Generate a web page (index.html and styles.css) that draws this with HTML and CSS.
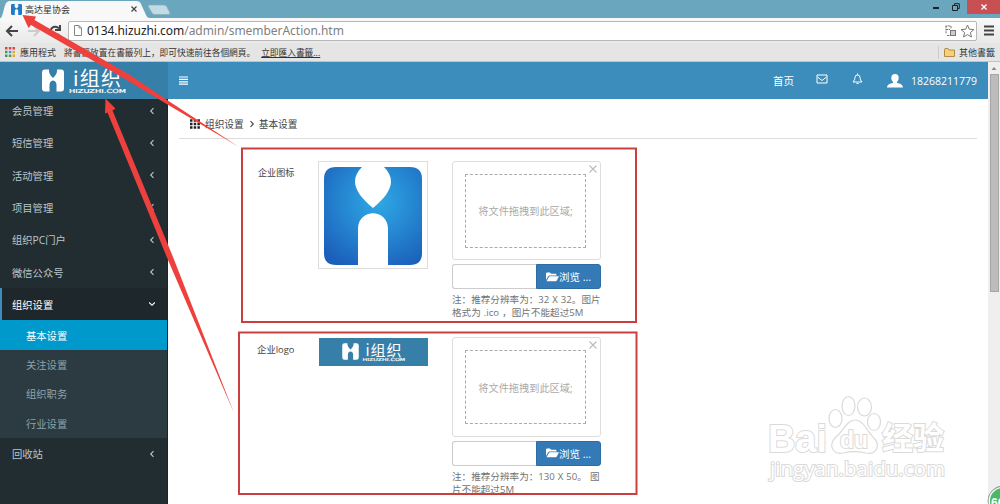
FILE: index.html
```html
<!DOCTYPE html>
<html lang="zh">
<head>
<meta charset="utf-8">
<title>高达星协会</title>
<link rel="stylesheet" href="styles.css">
</head>
<body>
<svg width="0" height="0" class="defs">
  <defs>
    <radialGradient id="blue" cx=".55" cy=".35" r=".75"><stop offset="0" stop-color="#2fa9e4"/><stop offset=".45" stop-color="#2689d3"/><stop offset="1" stop-color="#1b5fba"/></radialGradient>
    <symbol id="mark" viewBox="0 0 98 98"><path d="M12 0H38C25 13 31 26 49 41C67 26 73 13 60 0H86Q98 0 98 12V86Q98 98 86 98H64V62C64 41 34 41 34 62V98H12Q0 98 0 86V12Q0 0 12 0Z"/></symbol>
    <symbol id="brand" viewBox="0 0 86 28">
      <path fill="#fff" d="M3 1.500H7Q6.500 6 11 10Q15.500 6 15 1.500H19Q22 1.500 22 4.500V20.500Q22 23.500 19 23.500H14.500V17Q14.500 13 11 12.500Q7.500 13 7.500 17V23.500H3Q0 23.500 0 20.500V4.500Q0 1.500 3 1.500Z"/>
      <text class="brand-name" x="31" y="18" textLength="48">i组织</text>
      <text class="brand-url" x="27" y="25" textLength="57" lengthAdjust="spacingAndGlyphs">HIZUZHI.COM</text>
    </symbol>
    <symbol id="folder" viewBox="0 0 13 10"><path fill="#fff" d="M0 8V1.500Q0 .5 1 .5H4L5 1.800H9.500Q10.500 1.800 10.500 3V3.500H3.500Q2.600 3.500 2 4.500ZM.6 9.200 3 4.800Q3.200 4.300 4 4.300H13L10.800 8.600Q10.400 9.200 9.700 9.200Z"/></symbol>
    <symbol id="left" viewBox="0 0 6 8"><path d="M4.500 1.200 1.700 4 4.500 6.800" fill="none" stroke="currentColor" stroke-width="1.1"/></symbol>
  </defs>
</svg>
<div class="browser">
  <div class="titlebar">
    <svg class="tab-shape" width="172" height="19" viewBox="0 0 172 19"><path d="M0 19C3 18 4 4 7 2Q8 1 11 1H136Q140 1 141 4L146 15Q147 18 150 18V19Z" fill="#f8f8f8"/><path d="M149 5H164Q166 5 167 7L170 13Q170 14.500 168 14.500H155Q153 14.500 152 13L148 6Z" fill="#c3dbe5" stroke="#85adbb" stroke-width=".7"/></svg>
    <div class="tab-content">
      <svg width="11" height="11" fill="#207bc6"><use href="#mark"/></svg>
      <span class="tab-title">高达星协会</span>
      <svg class="tab-close" width="6" height="6"><path d="M.5.5 5.500 5.500M5.500.5.5 5.500" stroke="#444" stroke-width="1.2"/></svg>
    </div>
    <div class="window-buttons">
      <svg width="6" height="4"><path d="M0 3H6" stroke="#222" stroke-width="2"/></svg>
      <svg width="8" height="8"><path d="M.5 2.500H5.500V7.500H.5ZM2.500 2V.7H7.300V5.500H6" fill="none" stroke="#222"/></svg>
      <span class="close"><svg width="6" height="6"><path d="M.5.5 5.500 5.500M5.500.5.5 5.500" stroke="#fff" stroke-width="1.3"/></svg></span>
    </div>
  </div>
  <div class="toolbar">
    <svg width="62" height="20" fill="none" stroke="#444" stroke-width="2"><path d="M7 10H18M12 5 7 10 12 15"/><path d="M28 10H38M34 5 39 10 34 15" stroke="#ccc"/><path d="M59 7.500A4.600 4.600 0 1 0 59 13M60 4V9H55"/></svg>
    <div class="address">
      <svg width="8" height="11"><path d="M.5.5H5L7.500 3V10.500H.5ZM5 .5V3H7.500" fill="#fff" stroke="#888"/></svg>
      <span class="url"><b>0134.hizuzhi.com</b>/admin/smemberAction.htm</span>
      <svg class="address-icons" width="30" height="14"><g fill="none" stroke="#777"><path stroke-dasharray="2 .6" d="M.5 2H6M1 2V10M1 5.500H5M6 2V5M2 11.500H5"/><rect x="5.500" y="6.500" width="5" height="5" fill="#ccc"/><path d="M22.500 1 24.300 5.200 28.900 5.600 25.400 8.600 26.500 13 22.500 10.600 18.500 13 19.600 8.600 16.100 5.600 20.700 5.200Z" fill="#fff"/></g></svg>
    </div>
    <svg width="10" height="11"><path d="M0 1.500H10M0 5.500H10M0 9.500H10" stroke="#444" stroke-width="2"/></svg>
  </div>
  <div class="bookmarks">
    <svg width="10" height="10"><g stroke-width="2.400"><path d="M0 1.200H2.500M3.800 1.200H6.300M7.500 1.200H10" stroke="#d44"/><path d="M0 5H2.500M0 8.800H2.500M3.800 8.800H6.300" stroke="#469b54"/><path d="M3.800 5H6.300" stroke="#478cdf"/><path d="M7.500 5H10M7.500 8.800H10" stroke="#dfaa35"/></g></svg>
    <span class="apps">應用程式</span><span class="hint">將書籤放置在書籤列上，即可快速前往各個網頁。</span><a class="import">立即匯入書籤...</a>
    <span class="other"><svg width="11" height="9"><path d="M.5 2V1.500L1 .5H4L5 2H10.500V8.500H.5Z" fill="#f5cf7c" stroke="#b38c43"/></svg>其他書籤</span>
  </div>
</div>
<div class="page">
  <div class="app">
    <header>
      <div class="brand"><svg width="86" height="28"><use href="#brand"/></svg></div>
      <div class="topnav">
        <svg width="10" height="9"><path d="M0 1H9M0 3.400H9M0 5.800H9M0 8.200H9" stroke="#fff" stroke-width="1.200"/></svg>
        <div class="links">
          <span class="home">首页</span>
          <svg class="mail" width="12" height="10"><path d="M1 1H11V9H1ZM1.500 3 6 6.500 10.500 3" fill="none" stroke="#fff"/></svg>
          <svg class="bell" width="11" height="12"><path d="M1 9Q3 7 3 4.500Q3 2 5.500 2Q8 2 8 4.500Q8 7 10 9ZM5.500 2V.5M4.500 10.500H6.500" fill="none" stroke="#fff"/></svg>
          <svg class="user" width="16" height="14"><path d="M8 0C5.500 0 4.300 1.500 4.300 4C4.300 6 5.300 7.300 6 8V9C3 9.800.5 10 0 13.500H16C15.500 10 13 9.800 10 9V8C10.700 7.300 11.700 6 11.700 4C11.700 1.500 10.500 0 8 0Z" fill="#fff"/></svg>
          <span class="phone">18268211779</span>
        </div>
      </div>
    </header>
    <div class="body">
      <nav class="sidebar">
        <div class="item">会员管理<svg><use href="#left"/></svg></div>
        <div class="item">短信管理<svg><use href="#left"/></svg></div>
        <div class="item">活动管理<svg><use href="#left"/></svg></div>
        <div class="item">项目管理<svg><use href="#left"/></svg></div>
        <div class="item">组织PC门户<svg><use href="#left"/></svg></div>
        <div class="item">微信公众号<svg><use href="#left"/></svg></div>
        <div class="item open">组织设置<svg class="down"><use href="#left"/></svg></div>
        <div class="submenu">
          <div class="sub current">基本设置</div>
          <div class="sub">关注设置</div>
          <div class="sub">组织职务</div>
          <div class="sub">行业设置</div>
        </div>
        <div class="item">回收站<svg><use href="#left"/></svg></div>
      </nav>
      <main>
        <div class="crumbs"><svg width="10" height="10"><path d="M0 1.500H10M0 5H10M0 8.500H10" stroke="#222" stroke-width="2.400" stroke-dasharray="2.500 1.200"/></svg><span>组织设置</span><svg class="sep"><use href="#left"/></svg><span>基本设置</span></div>
        <section class="row">
          <div class="label">企业图标</div>
          <div class="icon-preview"><svg width="98" height="98" fill="url(#blue)"><use href="#mark"/></svg></div>
          <div class="upload">
            <div class="drop"><div class="zone">将文件拖拽到此区域;</div><svg class="x" width="8" height="8"><path d="M.5.5 7.500 7.500M7.500.5.5 7.500" stroke="#bbb" stroke-width="1.1"/></svg></div>
            <div class="file"><div class="filename"></div><div class="browse"><svg width="13" height="10"><use href="#folder"/></svg>浏览 ...</div></div>
            <div class="note">注：推荐分辨率为：32 X 32。图片<br>格式为 .ico ，图片不能超过5M</div>
          </div>
        </section>
        <section class="row">
          <div class="label logo-label">企业logo</div>
          <div class="logo-preview"><svg width="65" height="21"><use href="#brand"/></svg></div>
          <div class="upload">
            <div class="drop"><div class="zone">将文件拖拽到此区域;</div><svg class="x" width="8" height="8"><path d="M.5.5 7.500 7.500M7.500.5.5 7.500" stroke="#bbb" stroke-width="1.1"/></svg></div>
            <div class="file"><div class="filename"></div><div class="browse"><svg width="13" height="10"><use href="#folder"/></svg>浏览 ...</div></div>
            <div class="note">注：推荐分辨率为：130 X 50。 图<br>片不能超过5M</div>
          </div>
        </section>
      </main>
    </div>
  </div>
  <div class="scrollbar"><svg width="12" height="12"><path d="M3.500 8 6 5 8.500 8Z" fill="#888"/></svg><div class="thumb"></div></div>
</div>
<svg class="overlay" width="1000" height="504" viewBox="0 0 1000 504">
  <g fill="none" stroke="#cb403e" stroke-width="2"><rect x="242" y="148.500" width="394" height="173.500"/><rect x="239" y="332.500" width="397.500" height="161.500"/></g>
  <path fill="#ee403d" d="M22.500 15 36 16.500 34.500 20 130 75 167 100 239 147 165 103 125 79 31 25 28.500 28Z"/>
  <path fill="#ee403d" d="M105.500 98.500 115.500 108.500 112.500 110.500 173 257 234 413 168 260 107.500 112.500 105 113.500Z"/>
  <g class="watermark">
    <g fill="#fff" stroke="#dadada" stroke-width="2">
      <text class="wm-bai" x="768" y="452" textLength="59" lengthAdjust="spacingAndGlyphs">Bai</text>
      <g stroke-width="1.200"><ellipse cx="835.500" cy="418.500" rx="6.500" ry="9"/><ellipse cx="848.500" cy="406" rx="6.500" ry="9.500"/><ellipse cx="864.500" cy="407" rx="7" ry="9"/><ellipse cx="874" cy="422" rx="6.500" ry="8.500"/>
      <path d="M855 420C847 420 843 431 837 436C827 445 833 455 843 453C851 451 858 451 866 453C876 455 881 446 874 438C867 432 864 420 855 420Z"/></g>
      <text class="wm-du" x="840" y="448" textLength="28" lengthAdjust="spacingAndGlyphs">du</text>
      <text class="wm-cn" x="882" y="449" textLength="62" lengthAdjust="spacingAndGlyphs">经验</text>
      <text class="wm-url" x="770" y="476" textLength="175" lengthAdjust="spacingAndGlyphs">jingyan.baidu.com</text>
    </g>
  </g>
  <circle cx="1003" cy="501" r="15" fill="#49b867" stroke="#999"/><circle cx="1003" cy="501" r="13.700" fill="none" stroke="#fff" stroke-width="1.300"/>
  <text class="badge" x="991" y="507">66</text>
</svg>
</body>
</html>
```
FILE: styles.css
```css
* { box-sizing: border-box; }
body { margin: 0; width: 1000px; height: 504px; overflow: hidden; background: #fff; color: #444; font: 10px "Open Sans", "Noto Sans CJK SC", sans-serif; display: flex; flex-direction: column; position: relative; white-space: nowrap; }
svg { display: block; flex: none; }
.defs { position: absolute; }
.browser { flex: none; height: 62px; display: flex; flex-direction: column; background: #e5e5e5; border-bottom: 1px solid #b9c4cb; font-family: "Noto Sans", "Noto Sans CJK TC", sans-serif; }
.titlebar { height: 18px; background: #6aa7be; display: flex; justify-content: space-between; position: relative; }
.tab-shape { position: absolute; left: 0; top: 0; }
.tab-content { display: flex; align-items: center; padding: 0 0 0 11px; position: relative; width: 137px; }
.tab-title { margin-left: 3px; font-size: 9px; color: #333; }
.tab-close { margin-left: auto; }
.window-buttons { display: flex; align-items: center; height: 14px; gap: 13px; }
.window-buttons .close { width: 33px; height: 14px; margin-left: -6px; background: #c85053; display: flex; align-items: center; justify-content: center; }
.toolbar { height: 25px; background: linear-gradient(#f9f9f9, #e9e9e9); display: flex; align-items: center; padding-right: 6px; }
.address { width: 910px; height: 20px; margin: 0 7px 0 6px; border: 1px solid #b7b7b7; border-radius: 2px; background: #fff; display: flex; align-items: center; padding: 0 1px 0 5px; }
.url { margin-left: 5px; font-size: 12px; letter-spacing: -.04px; color: #808080; }
.url b { font-weight: 400; color: #222; }
.address-icons { margin-left: auto; }
.bookmarks { height: 18px; display: flex; align-items: center; padding: 0 5px; color: #333; font-size: 9px; }
.apps { margin-left: 5px; }
.hint { margin-left: 8px; font-size: 8.700px; }
.import { margin-left: 6px; text-decoration: underline; font-size: 8.700px; }
.other { margin-left: auto; display: flex; gap: 4px; align-items: center; border-left: 1px solid #ccc; padding-left: 5px; }
.page { flex: 1; min-height: 0; display: flex; }
.app { width: 988px; display: flex; flex-direction: column; }
header { height: 37px; flex: none; display: flex; background: #3c8dbc; color: #fff; }
.brand { width: 168px; flex: none; background: #367fa9; padding: 6px 0 0 42px; }
.brand-name { font: 400 20px "Noto Sans CJK SC", sans-serif; fill: #fff; }
.brand-url { font: 5.500px "DejaVu Sans", sans-serif; fill: #fff; stroke: #fff; stroke-width: .2px; }
.topnav { flex: 1; display: flex; align-items: center; justify-content: space-between; padding: 0 11px; }
.links { display: flex; align-items: center; }
.home { font-size: 10.500px; }
.mail { margin: -4px 0 0 22px; }
.bell { margin: -3px 0 0 24px; }
.user { margin-left: 24px; }
.phone { margin-left: 8px; font-size: 10.500px; }
.body { flex: 1; min-height: 0; display: flex; }
.sidebar { width: 168px; flex: none; background: #222d32; overflow: hidden; border-right: 1px solid #1b2428; }
.item { height: 32.300px; display: flex; align-items: center; justify-content: space-between; padding: 0 12px; color: #b8c7ce; font-size: 10.300px; }
.item:first-child { margin-top: -4.600px; }
.item svg, .sep { width: 6px; height: 8px; }
.item.open { background: #1e282c; color: #fff; border-left: 2px solid #3c8dbc; padding-left: 10px; }
.item .down { transform: rotate(-90deg); }
.submenu { background: #2c3b41; }
.sub { height: 29.300px; display: flex; align-items: center; padding-left: 26px; color: #8aa4af; font-size: 10.300px; }
.sub.current { background: #0099cc; color: #fff; }
main { flex: 1; padding: 13px 11px 0; overflow: hidden; }
.crumbs { height: 27px; display: flex; align-items: center; padding-left: 11px; padding-bottom: 3px; border-bottom: 1px solid #ddd; font-size: 9.700px; color: #444; }
.crumbs span { margin-left: 5px; }
.crumbs .sep { margin-left: 5px; transform: scaleX(-1); }
.crumbs .sep + span { margin-left: 4px; }
.row { height: 176.500px; display: flex; align-items: flex-start; padding: 0 0 0 79px; }
.crumbs + .row { margin-top: 21.500px; }
.label { width: 60px; padding-top: 4px; font-size: 9.100px; }
.logo-label { margin-left: -1px; width: 61px; padding-top: 5px; font-size: 9.400px; }
.icon-preview { width: 110px; height: 108.500px; border: 1px solid #ddd; padding: 5px; }
.logo-preview { width: 109px; height: 28px; background: #367fa9; padding: 4px 0 0 23px; margin: .6px 0 0 1px; }
.upload { margin-left: 24px; width: 149px; }
.drop { height: 99.500px; border: 1px solid #ddd; border-radius: 3px; padding: 12px; position: relative; }
.zone { width: 121px; height: 74px; border: 1px dashed #aaa; display: flex; align-items: center; justify-content: center; font-size: 10.200px; color: #aaa; }
.x { position: absolute; right: 3px; top: 3px; }
.file { display: flex; height: 25px; margin-top: 4px; }
.filename { flex: 1; border: 1px solid #ccc; border-right: 0; border-radius: 3px 0 0 3px; }
.browse { width: 65px; background: #337ab7; border: 1px solid #2e6da4; border-radius: 0 3px 3px 0; color: #fff; display: flex; align-items: center; justify-content: center; font-size: 10.500px; }
.note { margin-top: 4px; font-size: 9.600px; line-height: 13px; color: #737373; word-spacing: .5px; }
.scrollbar { width: 12px; background: #efefef; }
.thumb { height: 218px; margin: 0 1px 0 2px; background: #bcbcbc; border: 1px solid #a5a5a5; }
.overlay { position: absolute; left: 0; top: 0; pointer-events: none; }
.watermark text { paint-order: stroke; }
.wm-bai { font: 700 39px "Liberation Sans", sans-serif; }
.wm-du { font: 700 23px "Liberation Sans", sans-serif; }
.wm-cn { font: 700 31px "Noto Sans CJK SC", sans-serif; }
.wm-url { font: 20px "Open Sans", sans-serif; }
.badge { font: 700 12px "Liberation Sans", sans-serif; fill: #fff; }
```
